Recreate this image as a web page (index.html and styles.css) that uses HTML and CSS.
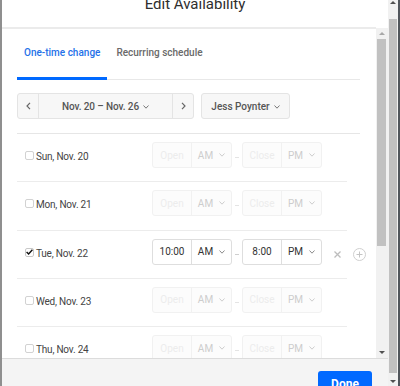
FILE: index.html
```html
<!DOCTYPE html>
<html lang="en">
<head>
<meta charset="utf-8">
<title>Edit Availability</title>
<link rel="stylesheet" href="styles.css">
</head>
<body>
<div class="window">
  <div class="modal">
    <header class="modal-header">
      <h1 class="title">Edit Availability</h1>
    </header>
    <div class="modal-main">
      <div class="pane">
        <nav class="tabs">
          <a class="tab active">One-time change</a>
          <a class="tab">Recurring schedule</a>
        </nav>
        <div class="toolbar">
          <div class="range">
            <button class="range-btn prev"><svg width="5" height="8" viewBox="0 0 5 8"><polyline points="4,0.8 1,4 4,7.2" fill="none" stroke="#666" stroke-width="1.2"/></svg></button>
            <button class="range-label">Nov. 20 – Nov. 26<svg class="chev" width="6" height="4" viewBox="0 0 6 4"><polyline points="0.5,0.5 3,3.2 5.5,0.5" fill="none" stroke="currentColor" stroke-width="1"/></svg></button>
            <button class="range-btn next"><svg width="5" height="8" viewBox="0 0 5 8"><polyline points="1,0.8 4,4 1,7.2" fill="none" stroke="#666" stroke-width="1.2"/></svg></button>
          </div>
          <button class="select">Jess Poynter<svg class="chev" width="6" height="4" viewBox="0 0 6 4"><polyline points="0.5,0.5 3,3.2 5.5,0.5" fill="none" stroke="currentColor" stroke-width="1"/></svg></button>
        </div>
        <ul class="days">
          <li class="day-row">
            <label class="day"><span class="check"></span>Sun, Nov. 20</label>
            <div class="time off"><span class="time-val">Open</span><span class="time-ampm">AM<svg width="6" height="4" viewBox="0 0 6 4"><polyline points="0.5,0.5 3,3.2 5.5,0.5" fill="none" stroke="currentColor" stroke-width="1"/></svg></span></div>
            <span class="dash off"></span>
            <div class="time off"><span class="time-val">Close</span><span class="time-ampm">PM<svg width="6" height="4" viewBox="0 0 6 4"><polyline points="0.5,0.5 3,3.2 5.5,0.5" fill="none" stroke="currentColor" stroke-width="1"/></svg></span></div>
          </li>
          <li class="day-row">
            <label class="day"><span class="check"></span>Mon, Nov. 21</label>
            <div class="time off"><span class="time-val">Open</span><span class="time-ampm">AM<svg width="6" height="4" viewBox="0 0 6 4"><polyline points="0.5,0.5 3,3.2 5.5,0.5" fill="none" stroke="currentColor" stroke-width="1"/></svg></span></div>
            <span class="dash off"></span>
            <div class="time off"><span class="time-val">Close</span><span class="time-ampm">PM<svg width="6" height="4" viewBox="0 0 6 4"><polyline points="0.5,0.5 3,3.2 5.5,0.5" fill="none" stroke="currentColor" stroke-width="1"/></svg></span></div>
          </li>
          <li class="day-row">
            <label class="day"><span class="check checked"><svg width="7" height="6" viewBox="0 0 7 6"><polyline points="0.6,3 2.6,5 6.4,0.8" fill="none" stroke="#111" stroke-width="1.4"/></svg></span>Tue, Nov. 22</label>
            <div class="time"><span class="time-val">10:00</span><span class="time-ampm">AM<svg width="6" height="4" viewBox="0 0 6 4"><polyline points="0.5,0.5 3,3.2 5.5,0.5" fill="none" stroke="currentColor" stroke-width="1"/></svg></span></div>
            <span class="dash"></span>
            <div class="time"><span class="time-val">8:00</span><span class="time-ampm">PM<svg width="6" height="4" viewBox="0 0 6 4"><polyline points="0.5,0.5 3,3.2 5.5,0.5" fill="none" stroke="currentColor" stroke-width="1"/></svg></span></div>
            <button class="icon-btn remove" aria-label="Remove"><svg width="7" height="7" viewBox="0 0 7 7"><path d="M0.5 0.5 L6.5 6.5 M6.5 0.5 L0.5 6.5" stroke="#bdbdbd" stroke-width="1.3" fill="none"/></svg></button>
            <button class="icon-btn add" aria-label="Add"><svg width="13" height="13" viewBox="0 0 13 13"><circle cx="6.5" cy="6.5" r="6" fill="none" stroke="#cfcfcf" stroke-width="1"/><path d="M6.5 3.5 V9.5 M3.5 6.5 H9.5" stroke="#c4c4c4" stroke-width="1" fill="none"/></svg></button>
          </li>
          <li class="day-row">
            <label class="day"><span class="check"></span>Wed, Nov. 23</label>
            <div class="time off"><span class="time-val">Open</span><span class="time-ampm">AM<svg width="6" height="4" viewBox="0 0 6 4"><polyline points="0.5,0.5 3,3.2 5.5,0.5" fill="none" stroke="currentColor" stroke-width="1"/></svg></span></div>
            <span class="dash off"></span>
            <div class="time off"><span class="time-val">Close</span><span class="time-ampm">PM<svg width="6" height="4" viewBox="0 0 6 4"><polyline points="0.5,0.5 3,3.2 5.5,0.5" fill="none" stroke="currentColor" stroke-width="1"/></svg></span></div>
          </li>
          <li class="day-row">
            <label class="day"><span class="check"></span>Thu, Nov. 24</label>
            <div class="time off"><span class="time-val">Open</span><span class="time-ampm">AM<svg width="6" height="4" viewBox="0 0 6 4"><polyline points="0.5,0.5 3,3.2 5.5,0.5" fill="none" stroke="currentColor" stroke-width="1"/></svg></span></div>
            <span class="dash off"></span>
            <div class="time off"><span class="time-val">Close</span><span class="time-ampm">PM<svg width="6" height="4" viewBox="0 0 6 4"><polyline points="0.5,0.5 3,3.2 5.5,0.5" fill="none" stroke="currentColor" stroke-width="1"/></svg></span></div>
          </li>
          <li class="day-row">
            <label class="day"><span class="check"></span>Fri, Nov. 25</label>
            <div class="time off"><span class="time-val">Open</span><span class="time-ampm">AM<svg width="6" height="4" viewBox="0 0 6 4"><polyline points="0.5,0.5 3,3.2 5.5,0.5" fill="none" stroke="currentColor" stroke-width="1"/></svg></span></div>
            <span class="dash off"></span>
            <div class="time off"><span class="time-val">Close</span><span class="time-ampm">PM<svg width="6" height="4" viewBox="0 0 6 4"><polyline points="0.5,0.5 3,3.2 5.5,0.5" fill="none" stroke="currentColor" stroke-width="1"/></svg></span></div>
          </li>
        </ul>
      </div>
      <div class="scrollbar inner">
        <span class="arrow up light"></span>
        <span class="thumb"></span>
        <span class="spacer"></span>
        <span class="arrow down"></span>
      </div>
    </div>
    <footer class="modal-footer">
      <button class="btn-done">Done</button>
    </footer>
  </div>
  <div class="scrollbar outer">
    <span class="arrow up"></span>
    <span class="thumb"></span>
    <span class="arrow down"></span>
  </div>
  <div class="edge"></div>
</div>
</body>
</html>
```

FILE: styles.css
```css
* {
  box-sizing: border-box;
  margin: 0;
  padding: 0;
}

html,
body {
  width: 400px;
  height: 386px;
  overflow: hidden;
}

body {
  font-family: Roboto, "Liberation Sans", sans-serif;
  background: #fff;
  color: #333;
}

button {
  font: inherit;
  color: inherit;
  background: none;
  border: none;
  cursor: pointer;
}

.window {
  display: flex;
  height: 386px;
}

.modal {
  flex: 1;
  min-width: 0;
  display: flex;
  flex-direction: column;
  border-left: 2px solid #8f8f8f;
  background: #fff;
}

.modal-header {
  flex: none;
  height: 27px;
  overflow: hidden;
  display: flex;
  justify-content: center;
}

.title {
  font-size: 15px;
  font-weight: 400;
  line-height: 15px;
  margin-top: -3px;
  color: #2e2e2e;
}

.modal-main {
  flex: 1;
  min-height: 0;
  display: flex;
}

.pane {
  flex: 1;
  min-width: 0;
  border-top: 2px solid #ebebeb;
  padding: 0 16px 0 15px;
  overflow: hidden;
}

/* tabs */
.tabs {
  display: flex;
  gap: 2px;
  box-shadow: inset 0 -1px 0 #e8e8e8;
}

.tab {
  font-size: 10px;
  font-weight: 500;
  line-height: 14px;
  padding: 17px 7px;
  border-bottom: 3px solid transparent;
  color: #6a6a6a;
}

.tab.active {
  color: #2571e8;
  border-bottom-color: #0069ff;
}

/* toolbar */
.toolbar {
  display: flex;
  gap: 7px;
  padding: 13px 0 14px;
  border-bottom: 1px solid #e6e6e6;
}

.range,
.select {
  height: 26px;
  border: 1px solid #e4e4e4;
  border-radius: 3px;
  background: #f7f7f7;
}

.range {
  display: flex;
  width: 177px;
}

.range-btn {
  flex: 0 0 21px;
  display: flex;
  align-items: center;
  justify-content: center;
}

.range-btn.prev {
  border-right: 1px solid #e4e4e4;
}

.range-btn.next {
  border-left: 1px solid #e4e4e4;
}

.range-label,
.select {
  display: flex;
  align-items: center;
  justify-content: center;
  gap: 4px;
  font-size: 10px;
  font-weight: 500;
  color: #555;
}

.range-label {
  flex: 1;
  letter-spacing: -0.1px;
}

.select {
  width: 89px;
}

.chev {
  color: #777;
  margin-top: 1px;
}

/* day rows */
.days {
  list-style: none;
}

.day-row {
  display: flex;
  align-items: flex-start;
  padding: 8px 0 14.33px 8px;
  background: linear-gradient(#ececec, #ececec) no-repeat left bottom / calc(100% - 13px) 1px;
}

.day {
  flex: 0 0 127px;
  display: flex;
  align-items: flex-start;
  gap: 2px;
  margin-top: 9px;
  font-size: 10px;
  line-height: 12px;
  color: #444;
  letter-spacing: -0.2px;
}

.check {
  flex: none;
  width: 9px;
  height: 9px;
  border: 1px solid #d2d2d2;
  border-radius: 2px;
  background: #fff;
  display: flex;
  align-items: center;
  justify-content: center;
}

.check.checked {
  border-color: #c8c8c8;
}

.time {
  flex: none;
  display: flex;
  width: 80px;
  height: 26px;
  border: 1px solid #dedede;
  border-radius: 3px;
  background: #fff;
  font-size: 10px;
  color: #333;
}

.time-val {
  flex: 0 0 39px;
  border-right: 1px solid #dedede;
  display: flex;
  align-items: center;
  justify-content: center;
}

.time-ampm {
  flex: 1;
  display: flex;
  align-items: center;
  justify-content: center;
  gap: 6px;
}

.time-ampm svg {
  color: #8a8a8a;
}

.time.off {
  border-color: #f1f1f1;
  background: #fcfcfc;
}

.time.off .time-val {
  border-color: #f1f1f1;
  color: #ececec;
}

.time.off .time-ampm,
.time.off .time-ampm svg {
  color: #cdcdcd;
}

.dash {
  flex: none;
  width: 4px;
  height: 1px;
  margin: 15px 3px 0;
  background: #cfcfcf;
}

.dash.off {
  background: #e4e4e4;
}

.icon-btn {
  flex: none;
  display: flex;
}

.remove {
  margin: 12px 0 0 12px;
}

.add {
  margin: 9px 0 0 12px;
}

/* scrollbars */
.scrollbar {
  flex: none;
  display: flex;
  flex-direction: column;
  align-items: center;
  background: #f1f1f1;
}

.scrollbar.inner {
  width: 12px;
  margin-top: 1px;
  padding: 4px 0 4px;
}

.scrollbar.outer {
  width: 10px;
  padding: 1px 0 3px;
}

.arrow {
  flex: none;
  width: 0;
  height: 0;
  border-left: 3px solid transparent;
  border-right: 3px solid transparent;
}

.arrow.up {
  border-bottom: 3px solid #505050;
}

.arrow.up.light {
  border-bottom-color: #a8a8a8;
}

.arrow.down {
  border-top: 3px solid #505050;
}

.thumb {
  background: #c1c1c1;
  align-self: stretch;
}

.inner .thumb {
  flex: none;
  height: 207px;
  margin: 4px 2px 0 1px;
}

.inner .spacer {
  flex: 1;
}

.outer .thumb {
  flex: 1;
  margin: 15px 1px 7px;
}

.edge {
  flex: none;
  width: 2px;
  background: #51565c;
}

/* footer */
.modal-footer {
  flex: none;
  height: 28px;
  border-top: 1px solid #dcdcdc;
  background: #f4f4f4;
  display: flex;
  justify-content: flex-end;
  align-items: flex-start;
  padding: 12px 16px 0 0;
  overflow: hidden;
}

.btn-done {
  flex: none;
  width: 54px;
  height: 26px;
  padding: 0;
  line-height: 26px;
  font-size: 12px;
  font-weight: 700;
  color: #fff;
  background: #0069ff;
  border-radius: 3px;
  text-align: center;
  display: block;
}
```
